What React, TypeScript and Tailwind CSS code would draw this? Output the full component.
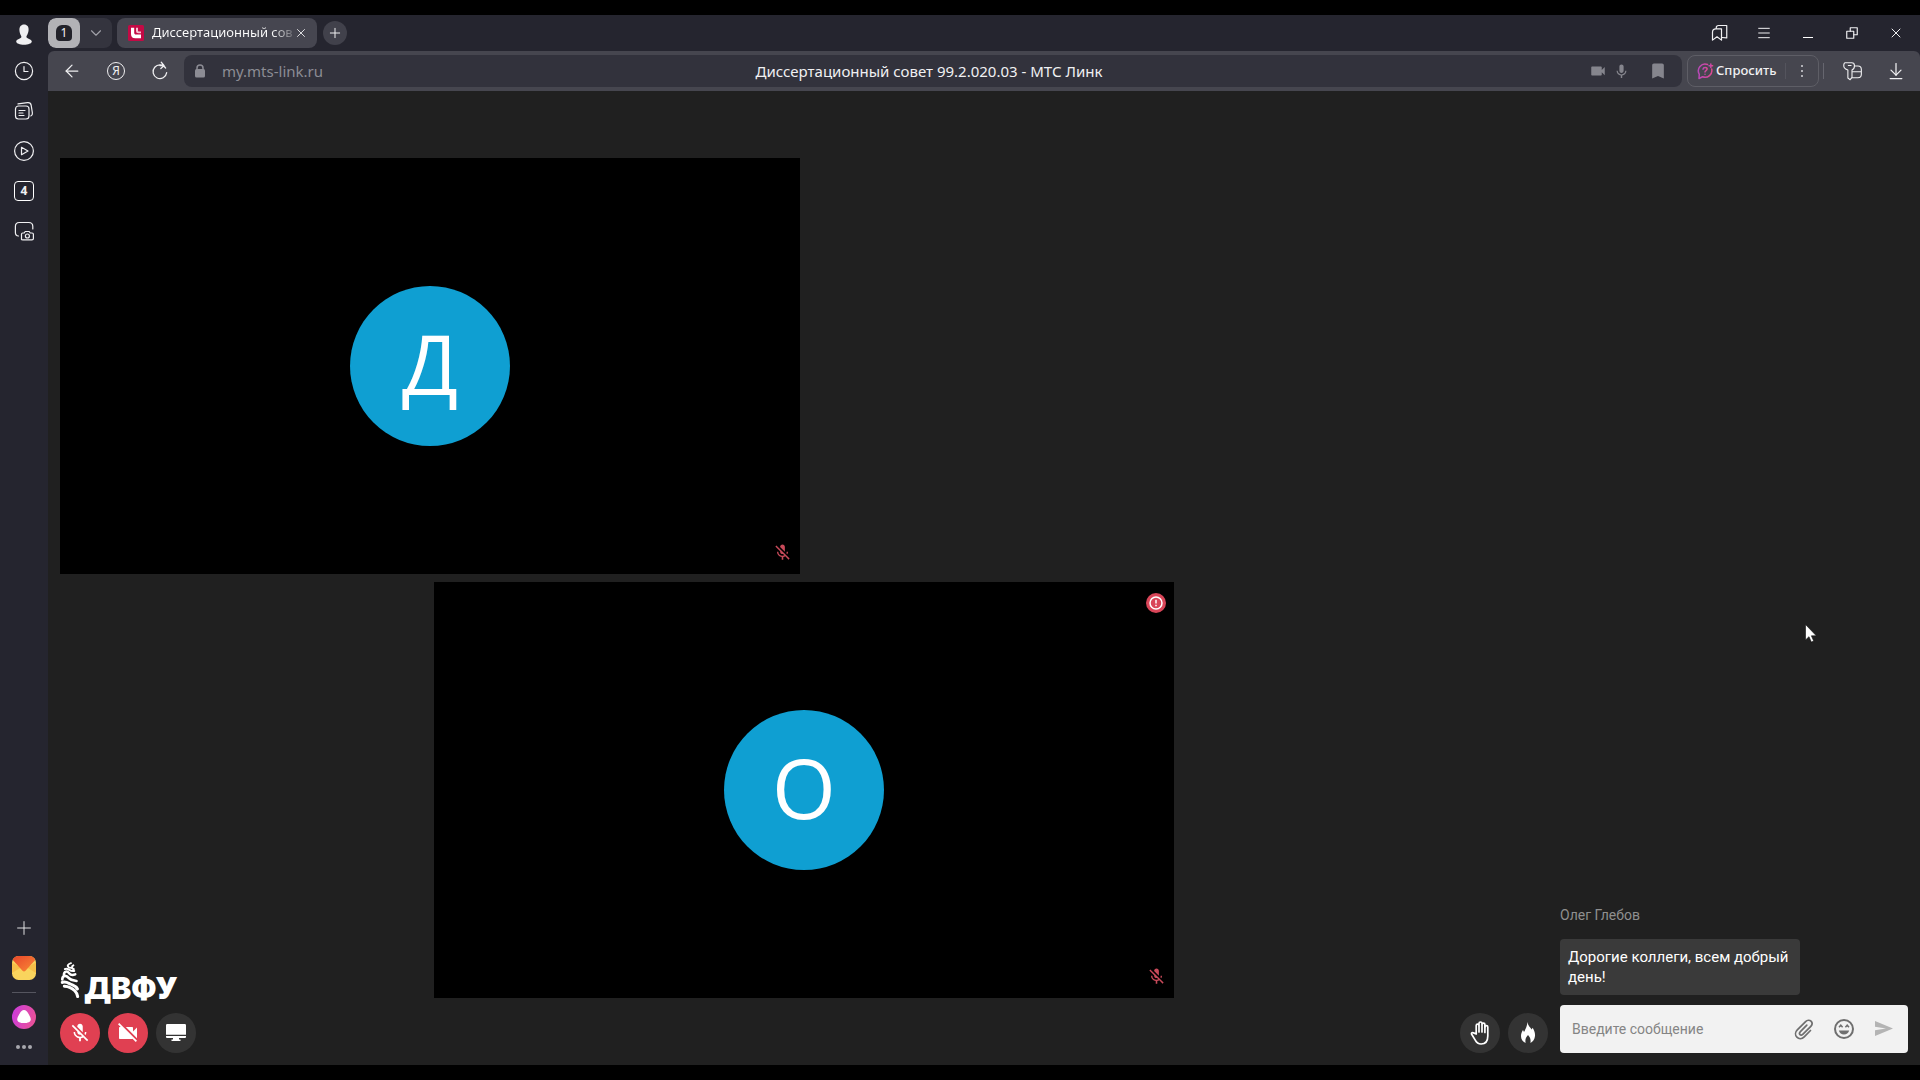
import type { ReactNode } from "react";
import { ArrowLeft, ArrowDownToLine, ChevronDown, Menu, Plus, X } from "lucide-react";
import { MdMicOff, MdVideocamOff, MdVideocam, MdMic, MdBookmark } from "react-icons/md";

/* ---------------------------------------------------------------- icons -- */

function Icon({ size = 24, children }: { size?: number; children: ReactNode }) {
  return (
    <svg
      width={size}
      height={size}
      viewBox="0 0 24 24"
      fill="none"
      stroke="currentColor"
      strokeWidth="1.2"
      strokeLinecap="round"
      strokeLinejoin="round"
      aria-hidden
    >
      {children}
    </svg>
  );
}

const ProfileIcon = () => (
  <Icon>
    <path
      d="M12 1.5c3.3 0 4.8 2.3 4.6 5.4-.1 1.4-.4 2.7-.9 3.8-.5 1.3-1.3 2.1-1.3 3.2 0 1.6 5.400 2 5.400 4.600 0 2-3.700 3.200-7.800 3.200s-7.800-1.200-7.800-3.200c0-2.600 5.200-2.800 5.200-4.600 0-1-.8-1.800-1.200-3-.4-1.200-.8-2.400-.8-3.900 0-3.200 1.600-5.500 4.600-5.500z"
      fill="currentColor"
      stroke="none"
    />
  </Icon>
);

const ClockIcon = () => (
  <Icon>
    <circle cx="12" cy="12" r="8.600" />
    <path d="M12 7.500V12.500h4" />
  </Icon>
);

const FeedIcon = () => (
  <Icon>
    <rect x="3.500" y="7" width="13.500" height="13" rx="3" />
    <path d="M7 11.500h6M7 14h4M7 16.500h5M6 4.800 15.500 3.600c2-.2 3.400.8 3.700 2.700L20.400 14c.2 1.500-.4 2.500-1.600 3" />
  </Icon>
);

const PlayIcon = () => (
  <Icon>
    <circle cx="12" cy="12" r="9.400" />
    <path d="M9.500 8.300v7.400L16 12z" />
  </Icon>
);

const ScreenshotIcon = () => (
  <Icon>
    <path d="M6.500 17C4.300 16.800 3.400 15.800 3.400 13.500v-6c0-2.600 1.200-4 3.800-4h9.600c2.600 0 4 1.200 4 4V10" />
    <path d="M9.500 20.500v-5.300c0-.8.500-1.200 1.200-1.200h1.500l1-1.500h4l1 1.500h1.800c.9 0 1.400.5 1.400 1.300v4.200c0 .9-.5 1.400-1.400 1.400h-9c-.9 0-1.500-.1-1.500-.4z" />
    <circle cx="15.400" cy="17" r="2" />
  </Icon>
);

const MailIcon = () => (
  <svg width="24" height="24" viewBox="0 0 24 24" aria-hidden>
    <defs>
      <linearGradient id="mail-flap" x1="0" y1="0" x2="1" y2="1">
        <stop offset="0" stopColor="#e8462b" />
        <stop offset="1" stopColor="#f98a35" />
      </linearGradient>
    </defs>
    <rect width="24" height="24" rx="6.500" fill="#f9d45d" />
    <path d="M0 6.500V17l9-5.500zM24 6.500V17l-9-5.500z" fill="#f6bf48" />
    <path d="M.8 4C1.800 1.500 4 0 6.500 0h11c2.500 0 4.700 1.500 5.700 4L13.500 14.800c-1 .9-2 .9-3 0z" fill="url(#mail-flap)" />
  </svg>
);

const AliceIcon = () => (
  <svg width="24" height="24" viewBox="0 0 24 24" aria-hidden>
    <defs>
      <linearGradient id="alice" x1="0" y1="0" x2="1" y2="0.3">
        <stop offset="0" stopColor="#c93be0" />
        <stop offset="1" stopColor="#e8509c" />
      </linearGradient>
    </defs>
    <circle cx="12" cy="12" r="12" fill="url(#alice)" />
    <path d="M12 5c1.900 0 3 1.300 4.300 3.600 1.500 2.500 2.500 4.300 2.500 5.800 0 2.500-3 3.600-6.800 3.600s-6.800-1.100-6.800-3.600c0-1.500 1-3.300 2.500-5.800C9 6.300 10.100 5 12 5z" fill="#fff" />
  </svg>
);

const MtsIcon = () => (
  <svg width="16" height="16" viewBox="0 0 16 16" className="shrink-0" aria-hidden>
    <rect width="16" height="16" rx="1.500" fill="#c30a45" />
    <path d="M3 2.800h3.200v4.900c0 1.200.6 1.800 1.800 1.800h5v3.700H7.300C4.400 13.200 3 11.800 3 9z" fill="#fff" />
    <path d="M8 2.800h2v2.700c0 .8.300 1.100 1.100 1.100H13v1.700h-2.500C8.800 8.300 8 7.500 8 5.800z" fill="#f6bfd0" />
  </svg>
);

const LockIcon = () => (
  <svg width="12" height="14" viewBox="0 0 12 14" aria-hidden>
    <rect x="1" y="5" width="10" height="8.500" rx="1.500" fill="currentColor" />
    <path d="M3 6V4a3 3 0 0 1 6 0v2" fill="none" stroke="currentColor" strokeWidth="1.500" />
  </svg>
);

const AskIcon = () => (
  <svg width="18" height="18" viewBox="0 0 18 18" fill="none" strokeLinecap="round" strokeLinejoin="round" aria-hidden>
    <defs>
      <linearGradient id="ask" x1="0" y1="0" x2="1" y2="0">
        <stop offset="0" stopColor="#b848b8" />
        <stop offset="1" stopColor="#dc4a92" />
      </linearGradient>
    </defs>
    <g stroke="url(#ask)" strokeWidth="1.500">
      <path d="M11.500 2.500A6.800 6.800 0 0 0 3.300 12.300L3 16.500l3.600-1.700A6.800 6.800 0 0 0 15.700 7" />
      <path d="M7 7.200c.2-1.200 1-1.700 2.100-1.700 1.200 0 2 .7 2 1.600 0 1.500-2.100 1.500-2.100 3M9 12.200v.1" />
      <path d="M14.800 2v3.500M13 3.800h3.600" />
    </g>
  </svg>
);

const CollectionsIcon = () => (
  <Icon size={18}>
    <g strokeWidth="1.600">
      <path d="M2 21.500V11C2 8 3.500 6.500 6.500 6.500H14v15L8 17z" />
      <path d="M7 6V5c0-2 1-3 3-3h11v16.500l-6.500-.5" />
    </g>
  </Icon>
);

const RestoreIcon = () => (
  <Icon size={14}>
    <g strokeWidth="2">
      <rect x="3" y="9" width="12" height="12" />
      <path d="M9 9V3h12v12h-6" />
    </g>
  </Icon>
);

const ReloadIcon = () => (
  <Icon size={20}>
    <path d="M18.800 8.500A8.200 8.200 0 1 0 20 14M13.500 1.500 17 5.500l-4 3.500M16.500 5.500H12" strokeWidth="1.500" />
  </Icon>
);

const KeysIcon = () => (
  <Icon size={22}>
    <path d="M4.500 3h7.200c2 0 3 1.200 3 3.200 0 2.300-1 4-2.700 4.800V19l-2 2.500-2.500-1.800V11C5 10 3 9 3 6.500 3 4.500 3.500 3 4.500 3zM8 6h3" />
    <path d="M15 6.500h3.500c2.700 0 3.700 1.200 3.700 3.800v5.200c0 2.600-1.200 3.900-3.700 3.900h-6.300M12.500 12.800h9.500" />
  </Icon>
);

const HandIcon = () => (
  <svg width="24" height="24" viewBox="0 0 24 24" fill="none" stroke="#fff" strokeWidth="1.700" strokeLinejoin="round" strokeLinecap="round" aria-hidden>
    <path d="M8.200 13V4.600a1.400 1.400 0 0 1 2.800 0V2.500a1.500 1.500 0 0 1 3 0v1a1.400 1.400 0 0 1 2.900 0V6a1.400 1.400 0 0 1 2.900 0v9c0 5.200-2.600 8-6.700 8-3 0-4.600-1.300-5.700-3.600L3.500 13c-.4-1 1-1.900 2-1.100z" />
    <path d="M11 5v6M14 4v7M16.900 5v6.500" />
  </svg>
);

const FireIcon = () => (
  <svg width="24" height="24" viewBox="0 0 24 24" fill="#fff" aria-hidden>
    <path d="M11.500 1c.2 3.500 2.700 5 4.200 7.500l1-1.800c1.400 2.300 2.600 5.300 2.300 8.300-.3 3.300-2 5.700-4.600 7 .6-3.200-.1-5.600-2.400-8-2.300 2.400-3 4.800-2.400 8-3-1.300-4.600-3.700-4.600-7 0-2.300.9-4.200 2-5.900l1 2C9.500 8 11.200 5 11.500 1z" />
  </svg>
);

const MonitorIcon = () => (
  <svg width="20" height="18" viewBox="0 0 20 18" fill="#fff" aria-hidden>
    <path d="M1.200 0h17.600Q20 0 20 1.200v9.600H0V1.200Q0 0 1.200 0zM0 12h20v1q0 1-1 1h-6v1.600h1.500V17h-9v-1.400H7V14H1q-1 0-1-1z" />
  </svg>
);

const ClipIcon = () => (
  <svg width="24" height="24" viewBox="0 0 24 24" fill="none" stroke="#6f6f6f" strokeWidth="1.700" strokeLinecap="round" aria-hidden>
    <path d="m18.500 13.500-6.300 6.300c-2.200 2.200-5.400 2.300-7.300.4s-1.800-5.100.4-7.300l8.300-8.300c1.700-1.700 4-1.800 5.400-.4s1.300 3.700-.4 5.400l-7.600 7.600c-1 1-2.300 1.100-3 .4s-.6-2 .4-3l6.400-6.400" />
  </svg>
);

const SmileIcon = () => (
  <svg width="24" height="24" viewBox="0 0 24 24" aria-hidden>
    <circle cx="12" cy="12" r="9" fill="none" stroke="#6f6f6f" strokeWidth="2" />
    <path d="M7 10.200 8.800 8.200l1.800 2M13.400 10.200l1.800-2 1.800 2" fill="none" stroke="#6f6f6f" strokeWidth="1.500" />
    <path d="M6.800 13.500h10.400c-.8 2.600-2.700 4-5.200 4s-4.400-1.400-5.200-4z" fill="#6f6f6f" />
  </svg>
);

const SendIcon = () => (
  <svg width="18" height="16" viewBox="0 0 18 16" fill="#b4b4b4" aria-hidden>
    <path d="M0 0 18 7.500 0 15V9.200L11 7.500 0 5.800z" />
  </svg>
);

const FeatherMark = () => (
  <svg width="22" height="36" viewBox="0 0 22 38" fill="none" stroke="#fff" strokeLinecap="round" aria-hidden>
    <path d="M11 1.200C8 2 6.500 4 8.500 5.500c2 1.300 4.500 0 5 2.500M13.500 3.500c-2 1-2 3 .5 4M4.500 7.500C8 5.500 9 10.500 14.500 9.500" strokeWidth="2" />
    <path d="M3.500 13.500c0-4 3.500-4.200 5.500-1.700 1.500 1.900 4 2.200 6.500 1.200" strokeWidth="2.600" />
    <path d="M1.800 18.500c0-4.500 4-5 7-1.500 2 2.300 5 2.500 8 3" strokeWidth="2.800" />
    <path d="M1.800 21.500c3.500-1.500 6 .5 9 2 2.700 1.300 5.500 1.800 7 5" strokeWidth="3.200" />
    <path d="M4 25.500c4.500.2 8.500 2.200 11 4.800 1.600 1.600 2.600 3.600 3 6.200" strokeWidth="3.200" />
  </svg>
);

/* --------------------------------------------------------------- pieces -- */

function IconButton({ label, className, children }: { label: string; className: string; children: ReactNode }) {
  return (
    <button type="button" aria-label={label} className={`flex shrink-0 items-center justify-center ${className}`}>
      {children}
    </button>
  );
}

const sidebarItems = [
  { label: "История", icon: <ClockIcon /> },
  { label: "Лента", icon: <FeedIcon /> },
  { label: "Видео", icon: <PlayIcon /> },
  {
    label: "Вкладки",
    icon: (
      <span className="flex size-5 items-center justify-center rounded border border-white text-xs font-bold">4</span>
    ),
  },
  { label: "Скриншот", icon: <ScreenshotIcon /> },
];

function Sidebar() {
  return (
    <nav className="flex w-12 shrink-0 flex-col items-center bg-[#25252f] text-[#f0f0f2]">
      <IconButton label="Профиль" className="h-9 w-12 pt-1">
        <ProfileIcon />
      </IconButton>
      {sidebarItems.map((item) => (
        <IconButton key={item.label} label={item.label} className="h-10 w-12">
          {item.icon}
        </IconButton>
      ))}
      <div className="mt-auto flex flex-col items-center">
        <IconButton label="Добавить" className="h-10 w-12">
          <Plus size={22} strokeWidth={1} />
        </IconButton>
        <IconButton label="Почта" className="h-10 w-12">
          <MailIcon />
        </IconButton>
        <div className="my-1 h-px w-6 bg-[#55555f]" />
        <IconButton label="Алиса" className="h-10 w-12">
          <AliceIcon />
        </IconButton>
        <button type="button" aria-label="Ещё" className="flex h-7 w-12 items-start justify-center gap-0.5 pt-2">
          <span className="size-1 rounded-full bg-[#a8a8ae]" />
          <span className="size-1 rounded-full bg-[#a8a8ae]" />
          <span className="size-1 rounded-full bg-[#a8a8ae]" />
        </button>
      </div>
    </nav>
  );
}

function TabStrip() {
  return (
    <div className="flex h-9 items-center text-[#f0f0f2]">
      <div className="flex h-[30px] w-16 overflow-hidden rounded-lg bg-[#34343e]">
        <button type="button" aria-label="Группа вкладок" className="flex w-8 items-center justify-center rounded-lg bg-[#b2b2b6]">
          <span className="flex size-4 items-center justify-center rounded-t-md rounded-b-sm bg-[#22222a] text-xs">1</span>
        </button>
        <IconButton label="Список групп" className="w-8 text-[#a0a0a8]">
          <ChevronDown size={18} strokeWidth={1.5} />
        </IconButton>
      </div>
      <div className="ml-[5px] flex h-[30px] w-[200px] items-center rounded-lg bg-[#464650] pr-2 pl-[11px]">
        <MtsIcon />
        <span className="ml-2 flex-1 bg-linear-to-r from-white from-85% to-white/20 bg-clip-text text-[13px] whitespace-nowrap text-transparent">
          Диссертационный сов
        </span>
        <IconButton label="Закрыть вкладку" className="size-4">
          <X size={14} strokeWidth={1.5} />
        </IconButton>
      </div>
      <IconButton label="Новая вкладка" className="ml-1.5 size-6 rounded-full bg-[#41414b]">
        <Plus size={16} strokeWidth={1.5} />
      </IconButton>
      <div className="ml-auto flex pr-0.5">
        <IconButton label="Коллекции" className="h-9 w-11">
          <CollectionsIcon />
        </IconButton>
        <IconButton label="Меню" className="h-9 w-11">
          <Menu size={16} strokeWidth={1.5} />
        </IconButton>
        <IconButton label="Свернуть" className="h-9 w-11">
          <span className="mt-2 h-px w-2.5 bg-white" />
        </IconButton>
        <IconButton label="Восстановить" className="h-9 w-11">
          <RestoreIcon />
        </IconButton>
        <IconButton label="Закрыть" className="h-9 w-11">
          <X size={16} strokeWidth={1.5} />
        </IconButton>
      </div>
    </div>
  );
}

function AddressBar() {
  return (
    <div className="flex h-10 items-center rounded-t-md bg-[#46464f] pr-0.5 pl-0.5 text-[#f0f0f2]">
      <IconButton label="Назад" className="h-10 w-11">
        <ArrowLeft size={20} strokeWidth={1.5} />
      </IconButton>
      <IconButton label="Яндекс" className="h-10 w-11">
        <span className="flex size-[18px] items-center justify-center rounded-full border border-[#f0f0f2] text-xs">Я</span>
      </IconButton>
      <IconButton label="Обновить" className="h-10 w-11">
        <ReloadIcon />
      </IconButton>
      <div className="ml-0.5 grid h-8 flex-1 grid-cols-[1fr_auto_1fr] items-center rounded-lg bg-[#32323c] pr-2">
        <div className="flex items-center gap-4 pl-2.5 text-[#8c8c94]">
          <LockIcon />
          <span className="text-[15px]">my.mts-link.ru</span>
        </div>
        <h1 className="text-[15px]">Диссертационный совет 99.2.020.03 - МТС Линк</h1>
        <div className="flex items-center justify-end text-[#85858d]">
          <MdVideocam size={18} />
          <MdMic size={17} className="ml-1.5" />
          <MdBookmark size={20} className="mr-1.5 ml-[18px]" />
        </div>
      </div>
      <div className="ml-[5px] flex h-8 w-[132px] items-center rounded-lg border border-[#5e5e66]">
        <button type="button" className="flex h-full flex-1 items-center gap-0.5 pl-2 text-[13px] font-medium">
          <AskIcon />
          Спросить
        </button>
        <div className="h-4 w-px bg-[#54545d]" />
        <button type="button" aria-label="Ещё" className="flex h-full w-8 flex-col items-center justify-center gap-[3px]">
          <span className="size-0.5 bg-[#b0b0b6]" />
          <span className="size-0.5 bg-[#b0b0b6]" />
          <span className="size-0.5 bg-[#b0b0b6]" />
        </button>
      </div>
      <div className="ml-1 h-4 w-px bg-[#66666f]" />
      <IconButton label="Пароли" className="ml-1.5 h-10 w-11">
        <KeysIcon />
      </IconButton>
      <IconButton label="Загрузки" className="h-10 w-11">
        <ArrowDownToLine size={20} strokeWidth={1.5} />
      </IconButton>
    </div>
  );
}

function VideoTile({ letter, className, children }: { letter: string; className: string; children?: ReactNode }) {
  return (
    <section className={`relative flex aspect-video items-center justify-center bg-black ${className}`}>
      <div className="flex size-40 items-center justify-center rounded-full bg-[#0f9fd2] pb-1.5 font-['Open_Sans',sans-serif] text-[82px] leading-none font-medium text-white">
        {letter}
      </div>
      {children}
      <MdMicOff size={19} className="absolute right-2 bottom-3 text-[#c84a5a]" />
    </section>
  );
}

function Stage() {
  return (
    <div className="flex flex-1 flex-col">
      <div className="flex flex-1 flex-col justify-center pt-[52px]">
        <div className="grid grid-cols-4 gap-2">
          <VideoTile letter="Д" className="col-span-2" />
          <div className="col-start-1 flex items-end self-end">
            <FeatherMark />
            <span className="ml-0.5 font-['Inter',sans-serif] text-[30px] leading-5 font-black text-white">ДВФУ</span>
          </div>
          <VideoTile letter="О" className="col-span-2">
            <span className="absolute top-[11px] right-2 flex size-5 items-center justify-center rounded-full bg-[#d94558]">
              <svg width="14" height="14" viewBox="0 0 14 14" fill="none" stroke="#fff" strokeWidth="1.500" aria-hidden>
                <circle cx="7" cy="7" r="6" />
                <path d="M7 3.800v3.800M7 8.800v1.500" />
              </svg>
            </span>
          </VideoTile>
        </div>
      </div>
      <div className="flex gap-2 pb-3 text-white">
        <IconButton label="Включить микрофон" className="size-10 rounded-full bg-[#e04052]">
          <MdMicOff size={22} />
        </IconButton>
        <IconButton label="Включить камеру" className="size-10 rounded-full bg-[#e04052]">
          <MdVideocamOff size={24} />
        </IconButton>
        <IconButton label="Демонстрация экрана" className="size-10 rounded-full bg-[#333333]">
          <MonitorIcon />
        </IconButton>
        <IconButton label="Поднять руку" className="ml-auto size-10 rounded-full bg-[#333333]">
          <HandIcon />
        </IconButton>
        <IconButton label="Реакции" className="size-10 rounded-full bg-[#333333]">
          <FireIcon />
        </IconButton>
      </div>
    </div>
  );
}

function Chat() {
  return (
    <aside className="flex w-[348px] flex-col justify-end pb-3 font-['Roboto',sans-serif] text-sm">
      <p className="text-[#8f8f8f]">Олег Глебов</p>
      <p className="mt-[14px] w-60 rounded-sm bg-[#3a3a3a] p-2 text-[15px] leading-5 text-white">
        Дорогие коллеги, всем добрый день!
      </p>
      <form className="mt-2.5 flex h-12 items-center rounded-sm bg-[#f2f2f2] pr-3 pl-3">
        <input
          type="text"
          aria-label="Введите сообщение"
          placeholder="Введите сообщение"
          className="min-w-0 flex-1 bg-transparent text-black outline-none placeholder:text-[#858585]"
        />
        <IconButton label="Прикрепить файл" className="w-10">
          <ClipIcon />
        </IconButton>
        <IconButton label="Эмодзи" className="w-10">
          <SmileIcon />
        </IconButton>
        <IconButton label="Отправить" className="ml-2 w-6">
          <SendIcon />
        </IconButton>
      </form>
    </aside>
  );
}

export default function App() {
  return (
    <div className="relative flex min-h-screen bg-black py-[15px] font-['Noto_Sans',sans-serif]">
      <Sidebar />
      <div className="flex min-w-0 flex-1 flex-col bg-[#25252f]">
        <TabStrip />
        <AddressBar />
        <main className="flex flex-1 gap-3 bg-[#202020] px-3">
          <Stage />
          <Chat />
        </main>
      </div>
      {/* mouse pointer */}
      <svg className="absolute top-[624px] right-[103px]" width="12" height="19" viewBox="0 0 12 19" aria-hidden>
        <path d="M.5.500v15.400l3.500-3.200 2.300 5.400 2.400-1-2.300-5.300h4.900z" fill="#fff" stroke="#111" strokeWidth="0.600" />
      </svg>
    </div>
  );
}
